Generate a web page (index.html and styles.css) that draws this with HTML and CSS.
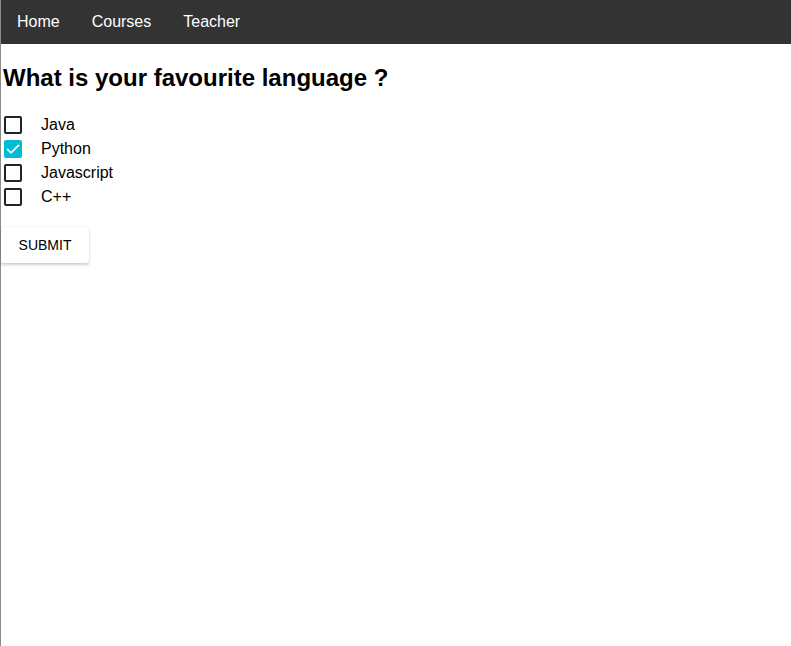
FILE: index.html
```html
<!DOCTYPE html>
<html>
<head>
<meta charset="utf-8">
<link rel="stylesheet" href="styles.css">
</head>
<body>
<div class="page">
  <nav class="navbar">
    <a class="nav-link">Home</a>
    <a class="nav-link">Courses</a>
    <a class="nav-link">Teacher</a>
  </nav>
  <main class="content">
    <h1 class="title">What is your favourite language ?</h1>
    <div class="options">
      <label class="option"><span class="box"></span><span class="label">Java</span></label>
      <label class="option"><span class="box checked"><svg viewBox="0 0 18 18" width="18" height="18"><path d="M3.2 9 L7 12.8 L15 4.8" fill="none" stroke="#fff" stroke-width="1.8"/></svg></span><span class="label">Python</span></label>
      <label class="option"><span class="box"></span><span class="label">Javascript</span></label>
      <label class="option"><span class="box"></span><span class="label">C++</span></label>
    </div>
    <button class="submit">SUBMIT</button>
  </main>
</div>
</body>
</html>
```
FILE: styles.css
```css
html, body {
  margin: 0;
  padding: 0;
  height: 100%;
}
body {
  font-family: "Liberation Sans", Arial, sans-serif;
  color: #000;
  background: #fff;
}
.page {
  min-height: 100%;
  border-left: 1px solid #8a8a8a;
  box-sizing: border-box;
}
.navbar {
  display: flex;
  height: 44px;
  align-items: center;
  background: #333;
}
.nav-link {
  color: #fff;
  font-size: 16px;
  padding: 0 16px;
}
.content {
  padding: 0 2px;
}
.title {
  margin: 20px 0 0 0;
  font-size: 24px;
  line-height: 28px;
  font-weight: bold;
}
.options {
  margin-top: 21px;
  display: flex;
  flex-direction: column;
}
.option {
  display: flex;
  align-items: center;
  height: 24px;
  font-size: 16px;
}
.box {
  width: 18px;
  height: 18px;
  box-sizing: border-box;
  border: 2px solid #222;
  border-radius: 2px;
  margin-left: 1px;
  margin-right: 19px;
  position: relative;
}
.box.checked {
  background: #00bcd4;
  border-color: #00bcd4;
}
.box svg {
  position: absolute;
  left: -2px;
  top: -2px;
}
.submit {
  margin-top: 18px;
  margin-left: -2px;
  height: 36px;
  width: 88px;
  border: none;
  border-radius: 2px;
  background: #fff;
  font-family: "Liberation Sans", Arial, sans-serif;
  font-size: 14px;
  color: #000;
  box-shadow: 0 2px 3px rgba(0,0,0,0.18), 0 0 2px rgba(0,0,0,0.08);
}
```
